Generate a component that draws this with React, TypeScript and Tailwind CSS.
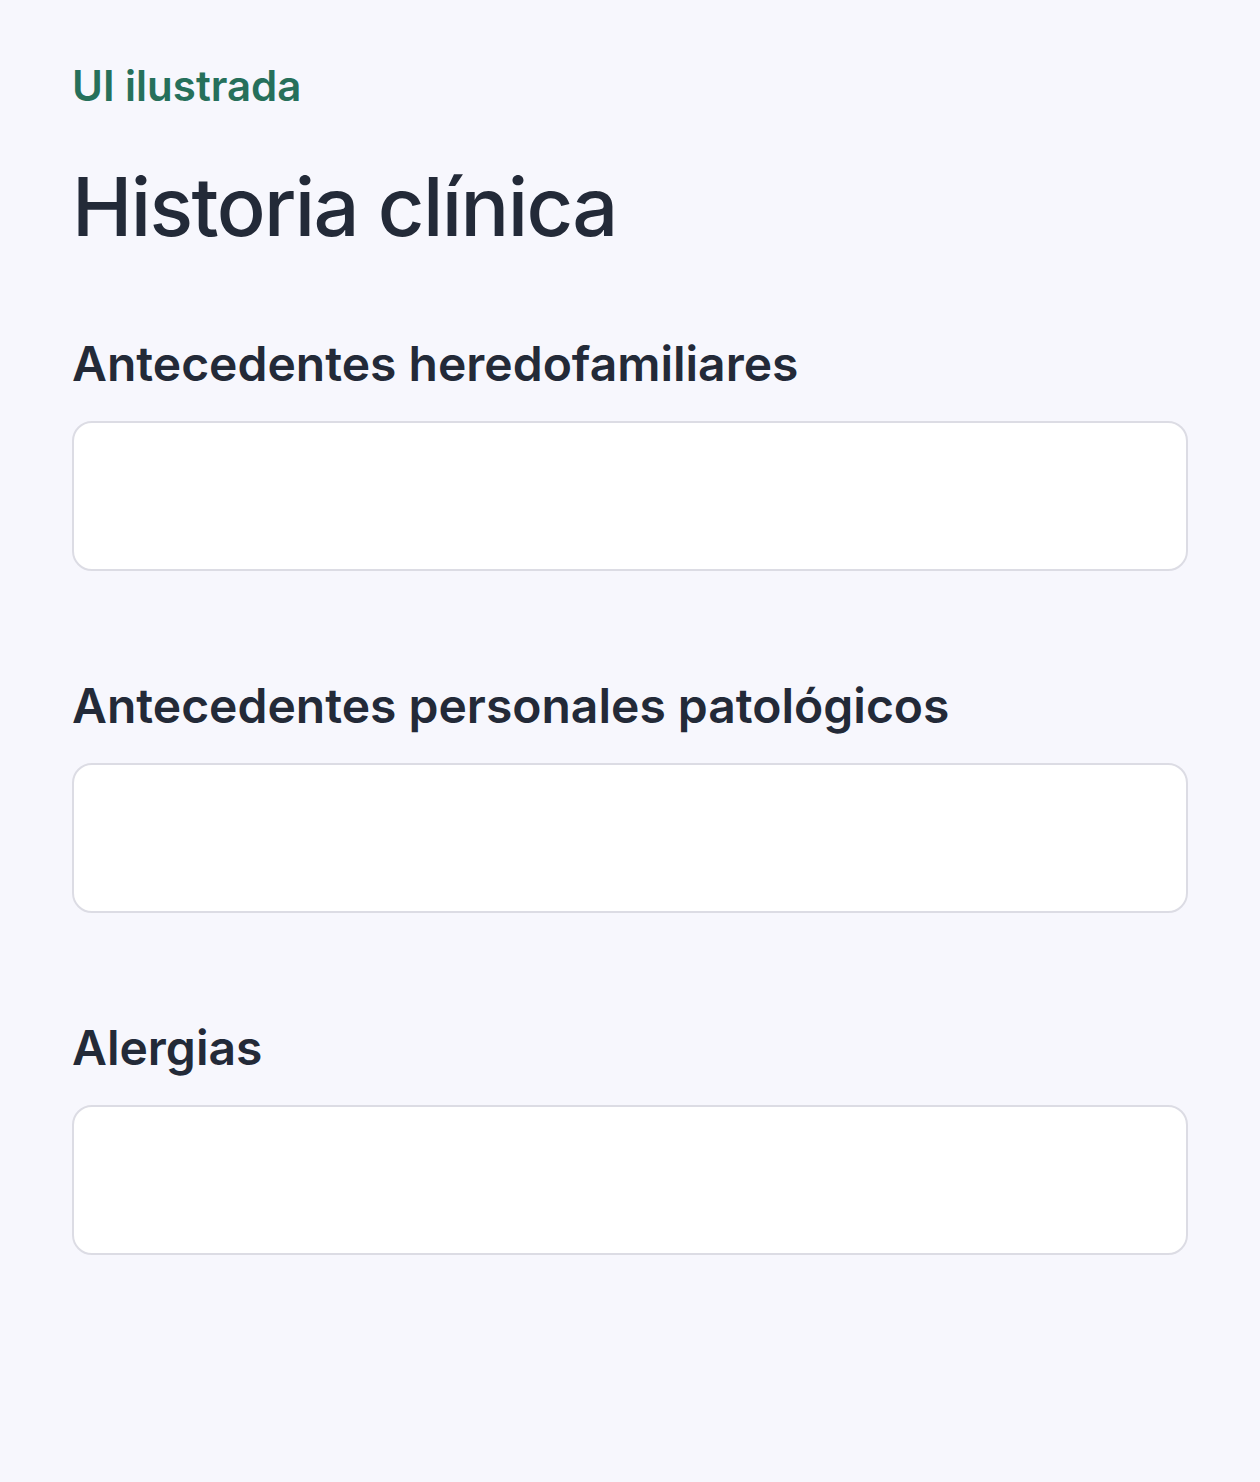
const fields = [
  'Antecedentes heredofamiliares',
  'Antecedentes personales patológicos',
  'Alergias',
];

export default function App() {
  return (
    <div
      className="min-h-[1482px] bg-[#f7f7fd] px-[72px] pt-[62px] text-[#232a38]"
      style={{ fontFamily: 'Inter, "Noto Sans", sans-serif' }}
    >
      <p className="text-[42px] font-semibold leading-[48px] text-[#26705b]">UI ilustrada</p>
      <h1 className="mt-[49px] text-[81px] font-medium leading-[96px] tracking-[-0.02em]">
        Historia clínica
      </h1>
      <div className="mt-[80px] flex flex-col gap-[106px]">
        {fields.map((label) => (
          <div key={label}>
            <label className="block text-[48px] font-semibold leading-[58px] text-[#232a38]">
              {label}
            </label>
            <textarea
              className="mt-[28px] block h-[150px] w-full resize-none rounded-[20px] border-2 border-[#dcdce4] bg-white px-6 py-4 outline-none"
              aria-label={label}
            />
          </div>
        ))}
      </div>
    </div>
  );
}
